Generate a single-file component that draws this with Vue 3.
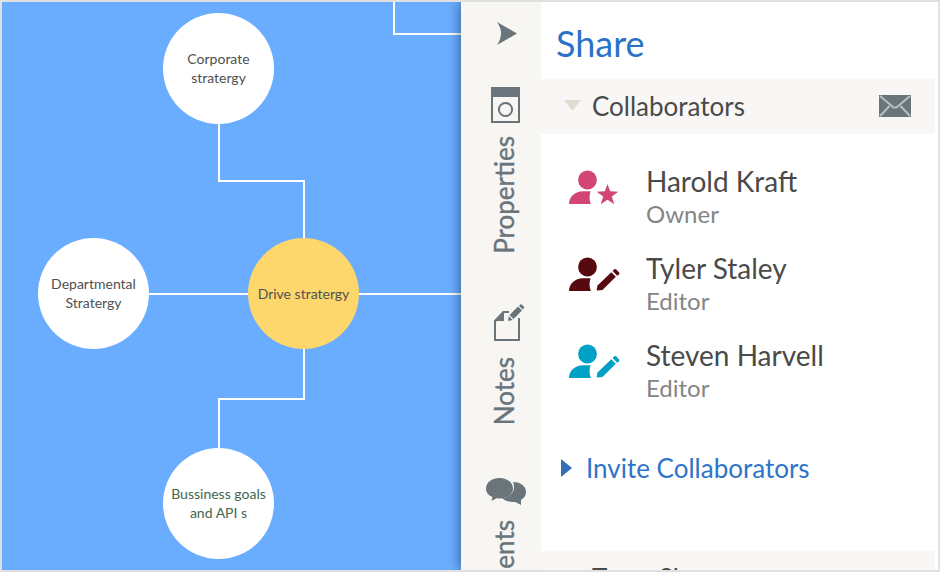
<script setup>
const nodes = [
  { id: 'corporate', lines: ['Corporate', 'stratergy'], x: 161, y: 11, tone: 'plain' },
  { id: 'departmental', lines: ['Departmental', 'Stratergy'], x: 36, y: 236, tone: 'plain' },
  { id: 'drive', lines: ['Drive stratergy'], x: 246, y: 236, tone: 'focus' },
  { id: 'goals', lines: ['Bussiness goals', 'and API s'], x: 161, y: 446, tone: 'goal' },
]

const collaborators = [
  { name: 'Harold Kraft', role: 'Owner', tone: 'pink' },
  { name: 'Tyler Staley', role: 'Editor', tone: 'maroon' },
  { name: 'Steven Harvell', role: 'Editor', tone: 'teal' },
]
</script>

<template>
  <div class="app">
    <main class="canvas">
      <svg class="links" width="100%" height="100%" aria-hidden="true">
        <path d="M217 121V179H302V238M146 292H248M356 292H2000M302 346V397H217V447M392 0V32H2000" />
      </svg>
      <div
        v-for="node in nodes"
        :key="node.id"
        class="node"
        :class="node.tone"
        :style="{ left: node.x + 'px', top: node.y + 'px' }"
      >
        <span v-for="line in node.lines" :key="line">{{ line }}</span>
      </div>
    </main>

    <aside class="panel">
      <nav class="rail" aria-label="Panel tabs">
        <button class="collapse" type="button" aria-label="Collapse panel">
          <svg width="24" height="24" viewBox="-2 0 24 24"><path d="M1 0L21 11.500L1 23Q9 11.500 1 0Z" fill="currentColor" /></svg>
        </button>
        <button class="tab" type="button">
          <svg width="30" height="36" viewBox="0 0 30 36">
            <path d="M1 1H28V35H1Z" fill="none" stroke="currentColor" stroke-width="2" />
            <path d="M0 0H29V10H0Z" fill="currentColor" />
            <circle cx="14.500" cy="22.500" r="6.600" fill="none" stroke="currentColor" stroke-width="2" />
          </svg>
          <span class="tab-text">Properties</span>
        </button>
        <button class="tab" type="button">
          <svg width="38" height="40" viewBox="-6 0 38 40">
            <path d="M16 8H11L2 17.500V36H26V14" fill="none" stroke="currentColor" stroke-width="2" />
            <path d="M11 7V17H1V16.500L10 7Z" fill="currentColor" />
            <path d="M15 17L15.800 12L19.700 16Z" fill="currentColor" />
            <path d="M16.500 11L25 2.600L29 6.600L20.600 15Z" fill="currentColor" />
            <path d="M26 1.700L28 0L31.500 3.300L29.800 5.600Z" fill="currentColor" />
          </svg>
          <span class="tab-text">Notes</span>
        </button>
        <button class="tab" type="button">
          <svg width="40" height="32" viewBox="0 -3 40 32">
            <path d="M27 4C35 4 40 8.500 40 14C40 17 38.500 20 35 22L35 27L29.500 24C24 24.500 19 23 16 20C24 19 28 14 28 9.500C28 7 27.500 5.500 27 4Z" fill="currentColor" />
            <path d="M13.500 0C21 0 27 4.500 27 10.500S21 20.500 13.500 20.500L10.500 20.300L5.500 23L6.500 19C2.500 17.500 0 14.500 0 10.500C0 4.500 6 0 13.500 0Z" fill="currentColor" />
          </svg>
          <span class="tab-text">Comments</span>
        </button>
      </nav>

      <section class="share">
        <h1>Share</h1>

        <div class="section-head">
          <button class="toggle" type="button" aria-expanded="true">
            <svg width="18" height="12" viewBox="0 0 18 12"><path d="M0 0H17L8.500 11Z" fill="#dfdcd0" /></svg>
            <span>Collaborators</span>
          </button>
          <button class="mail" type="button" aria-label="Email collaborators">
            <svg width="32" height="22" viewBox="0 0 32 22">
              <path d="M0 0H32V22H0Z" fill="currentColor" />
              <path d="M1 1L11 9.500L14.500 12.500H17.500L21 9.500L31 1M1 21L10.500 11M31 21L21.500 11" fill="none" stroke="#b9bec1" stroke-width="2" />
            </svg>
          </button>
        </div>

        <ul class="people">
          <li v-for="person in collaborators" :key="person.name">
            <svg :class="person.tone" width="54" height="38" viewBox="0 0 54 38" aria-hidden="true" fill="currentColor">
              <circle cx="19.500" cy="11" r="9.400" />
              <path d="M1 35C1 28 7 22.300 15 22.300H22.500Q20.500 28.500 22.800 35Z" />
              <path
                v-if="person.role === 'Owner'"
                d="M39.500 15L42.200 22.300L50.300 22.700L43.800 27.500L46.300 35.200L39.500 30.800L32.700 35.200L35.200 27.500L28.700 22.700L36.800 22.300Z"
              />
              <g v-else>
                <path d="M29.500 29.500L43.300 16.200L47.800 20.700L34.500 34L29.300 34.500Q28.600 34.400 28.700 33.500Z" />
                <path d="M44.600 15L46.300 13.300Q47.200 12.500 48.100 13.300L51.200 16.500Q51.900 17.400 51 18.200L49.100 19.700Z" />
              </g>
            </svg>
            <div class="who">
              <strong>{{ person.name }}</strong>
              <span>{{ person.role }}</span>
            </div>
          </li>
        </ul>

        <button class="invite" type="button">
          <svg width="12" height="18" viewBox="0 0 12 18"><path d="M0 0L11 9L0 18Z" fill="#3470b8" /></svg>
          <span>Invite Collaborators</span>
        </button>

        <div class="section-head">
          <button class="toggle" type="button" aria-expanded="false">
            <svg width="18" height="12" viewBox="0 0 18 12"><path d="M0 0H17L8.500 11Z" fill="#dfdcd0" /></svg>
            <span>Team Share</span>
          </button>
        </div>
      </section>
    </aside>
  </div>
</template>

<style>
body {
  overflow: hidden;
}
</style>

<style scoped>
.app {
  display: grid;
  grid-template-columns: minmax(0, 1fr) auto;
  grid-template-rows: minmax(0, 1fr);
  box-sizing: border-box;
  height: 100vh;
  border: 2px solid #e0e0e0;
  overflow: hidden;
  background: #fff;
  color: #4a4a4a;
  font-family: Lato, "Liberation Sans", sans-serif;
}

button {
  display: flex;
  align-items: center;
  margin: 0;
  padding: 0;
  border: 0;
  background: none;
  color: inherit;
  font: inherit;
  cursor: pointer;
}

svg {
  display: block;
  flex: none;
}

.canvas {
  position: relative;
  overflow: hidden;
  background: #6aadff;
}

.links path {
  fill: none;
  stroke: #fff;
  stroke-width: 2;
}

.node {
  position: absolute;
  display: flex;
  flex-direction: column;
  align-items: center;
  justify-content: center;
  box-sizing: border-box;
  width: 111px;
  height: 111px;
  padding-bottom: 2px;
  border-radius: 50%;
  background: #fff;
  color: #505050;
  font-size: 14px;
  line-height: 19px;
  white-space: nowrap;
}

.focus {
  padding-bottom: 0;
  background: #fed76c;
}

.goal {
  color: #42664f;
}

.panel {
  position: relative;
  display: grid;
  grid-template-columns: 80px 397px;
  grid-template-rows: minmax(0, 1fr);
  box-shadow: -1px 0 12px rgba(0, 0, 0, 0.45);
}

.rail {
  display: flex;
  flex-direction: column;
  align-items: center;
  gap: 50px;
  padding: 20px 0 0 9px;
  overflow: hidden;
  background: #f8f6f2;
  color: #69747b;
}

.collapse {
  margin-bottom: -9px;
}

.tab {
  flex: none;
  flex-direction: column;
  gap: 13px;
}

.tab-text {
  margin-right: 4px;
  writing-mode: vertical-rl;
  transform: rotate(180deg);
  font-size: 26px;
  line-height: 32px;
  -webkit-text-stroke: 0.4px currentColor;
}

.share {
  display: flex;
  flex-direction: column;
  padding-right: 3px;
  overflow: hidden;
  background: #fff;
}

h1 {
  margin: 0;
  padding: 19px 15px 14px;
  color: #2a72c8;
  font-size: 36px;
  font-weight: 400;
  line-height: 44px;
}

.section-head {
  display: flex;
  flex: none;
  align-items: center;
  justify-content: space-between;
  box-sizing: border-box;
  height: 55px;
  padding: 0 24px 2px 23px;
  background: #f9f7f5;
}

.toggle {
  gap: 10px;
  font-size: 26px;
  line-height: 32px;
}

.mail {
  color: #69747b;
}

.people {
  display: flex;
  flex-direction: column;
  margin: 0;
  padding: 31px 0 0 27px;
  list-style: none;
}

.people li {
  display: flex;
  gap: 24px;
  height: 87px;
}

.people svg {
  margin-top: 4px;
}

.pink {
  color: #d14577;
}

.maroon {
  color: #570910;
}

.teal {
  color: #00a1c6;
}

.who {
  display: flex;
  flex-direction: column;
  gap: 1px;
}

.who strong {
  font-size: 28px;
  font-weight: 400;
  line-height: 32px;
}

.who span {
  color: #858585;
  font-size: 24px;
  line-height: 32px;
}

.invite {
  gap: 13px;
  margin: 26px 0 67px 20px;
  color: #2f74c9;
  font-size: 26px;
  line-height: 32px;
}
</style>
